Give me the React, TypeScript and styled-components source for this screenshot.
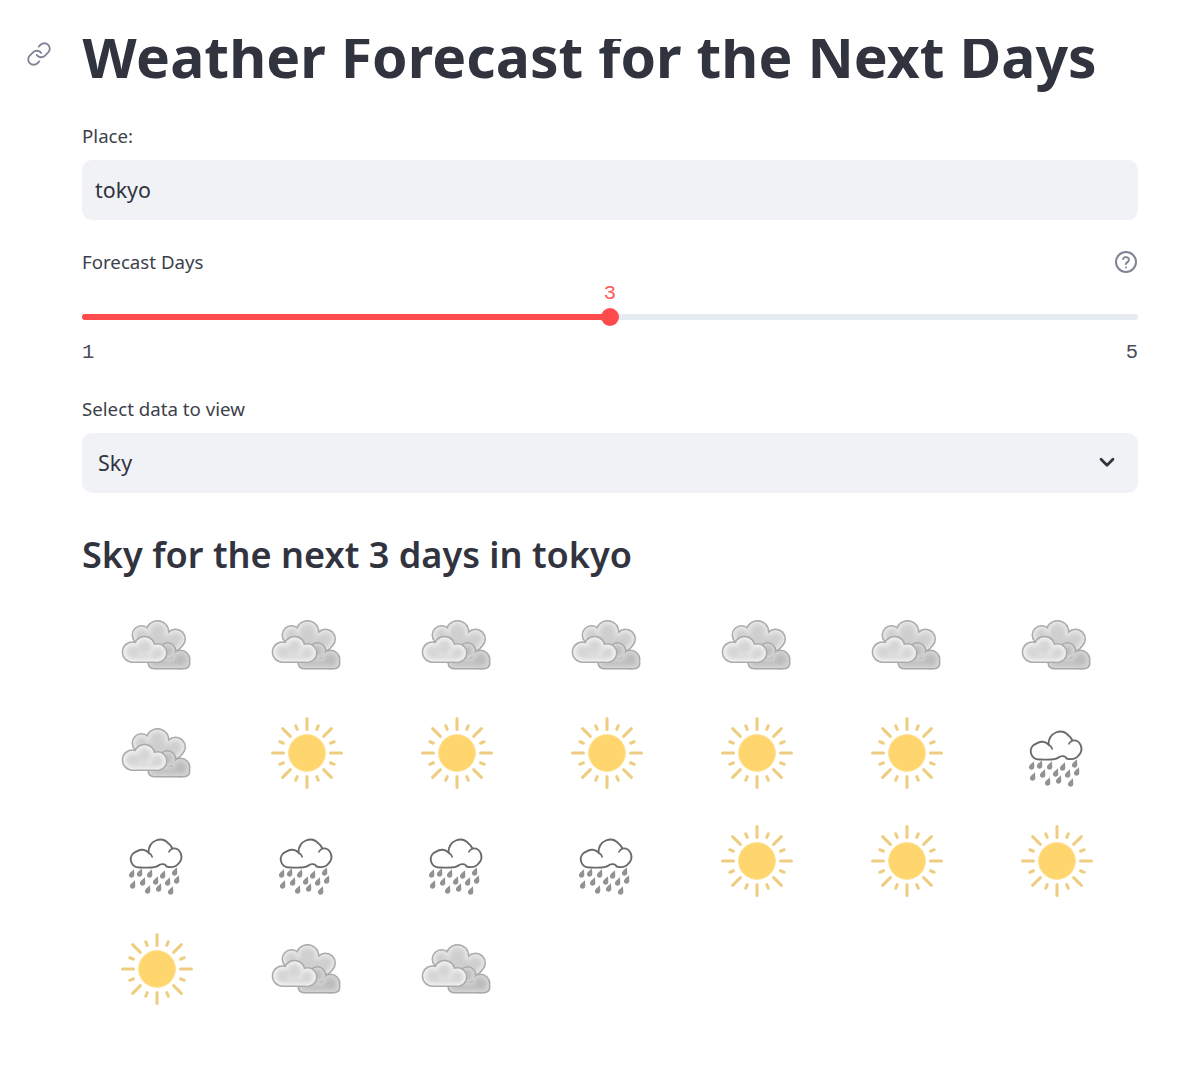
import React from "react";
import styled, { createGlobalStyle } from "styled-components";

const GlobalStyle = createGlobalStyle`
  html, body {
    margin: 0;
    padding: 0;
    background: #ffffff;
    color: #31333f;
    font-family: "Noto Sans", "Open Sans", sans-serif;
  }
`;

const Page = styled.main`
  width: 1056px;
  height: 1087px;
  padding-left: 82px;
  overflow: hidden;
`;

const TitleClip = styled.header`
  position: relative;
  height: 66px;
  margin-top: 39px;
  margin-bottom: 19px;
`;

const TitleWindow = styled.div`
  height: 66px;
  overflow: hidden;
`;

const Title = styled.h1`
  margin: 0;
  font-size: 57px;
  font-weight: 700;
  line-height: 34px;
  white-space: nowrap;
  letter-spacing: 0.06px;
  color: #31333f;
`;

const AnchorLink = styled.a`
  position: absolute;
  left: -56px;
  top: 2px;
  width: 26px;
  height: 26px;
  color: #808495;
`;

const Field = styled.section<{ $gap: number }>`
  margin-bottom: ${(p) => p.$gap}px;
`;

const LabelRow = styled.div`
  display: flex;
  justify-content: space-between;
  align-items: center;
  height: 24px;
  margin-bottom: 12px;
`;

const Label = styled.label`
  font-size: 18.7px;
  line-height: 24px;
  color: #3d3f4b;
`;

const TextInput = styled.div`
  box-sizing: border-box;
  height: 60px;
  padding: 0 0 2px 13px;
  display: flex;
  align-items: center;
  border-radius: 10px;
  background: #f0f2f6;
  font-size: 21.4px;
  color: #31333f;
`;

const SelectBox = styled(TextInput)`
  justify-content: space-between;
  padding: 0 20px 2px 16px;
`;

const HelpIcon = styled.span`
  display: flex;
  width: 24px;
  height: 24px;
  color: #808495;
`;

const SliderWrap = styled.div`
  position: relative;
  height: 66px;
  margin-top: -4px;
`;

const SliderValue = styled.span`
  position: absolute;
  top: 2px;
  transform: translateX(-50%);
  font-family: "Liberation Mono", monospace;
  font-size: 20.5px;
  line-height: 20px;
  color: #ff5a5a;
`;

const Track = styled.div`
  position: absolute;
  left: 0;
  right: 0;
  top: 32px;
  height: 6px;
  border-radius: 3px;
  background: #e6eaf1;
`;

const TrackFill = styled.div`
  height: 100%;
  border-radius: 3px;
  background: #ff4b4b;
`;

const Thumb = styled.div`
  position: absolute;
  top: 26px;
  width: 18px;
  height: 18px;
  margin-left: -9px;
  border-radius: 50%;
  background: #ff4b4b;
`;

const TickRow = styled.div`
  position: absolute;
  left: 0;
  right: 0;
  top: 61px;
  display: flex;
  justify-content: space-between;
  font-family: "Liberation Mono", monospace;
  font-size: 20.5px;
  line-height: 20px;
  color: #4a4c58;
`;

const Subtitle = styled.h2`
  margin: 0 0 29px;
  font-size: 36.1px;
  font-weight: 600;
  line-height: 52px;
  color: #31333f;
  white-space: nowrap;
`;

const IconGrid = styled.div`
  display: grid;
  grid-template-columns: repeat(7, 150px);
  grid-auto-rows: 72px;
  row-gap: 36px;
  justify-items: center;
`;

const WeatherSvg = styled.svg`
  width: 72px;
  height: 72px;
  display: block;
  overflow: visible;
  filter: blur(0.5px);
`;

type Sky = "cloud" | "sun" | "rain";

const SKIES: Sky[] = [
  "cloud", "cloud", "cloud", "cloud", "cloud", "cloud", "cloud",
  "cloud", "sun", "sun", "sun", "sun", "sun", "rain",
  "rain", "rain", "rain", "rain", "sun", "sun", "sun",
  "sun", "cloud", "cloud",
];

const Defs = () => (
  <svg width="0" height="0" style={{ position: "absolute" }} aria-hidden="true">
    <defs>
      <filter id="soft" x="-20%" y="-20%" width="140%" height="140%">
        <feGaussianBlur stdDeviation="2.2" />
      </filter>
    </defs>
  </svg>
);

// one lump of cloud: grey outline, pale rim, soft darker middle
const Puff = ({ circles, base, rim, core }: { circles: number[][]; base: number[]; rim: string; core: string }) => {
  const shapes = (grow: number, extra: object) => (
    <g {...extra}>
      {circles.map(([cx, cy, r], i) => (
        <circle key={i} cx={cx} cy={cy} r={r + grow} />
      ))}
      <rect
        x={base[0] - grow}
        y={base[1] - grow}
        width={base[2] + grow * 2}
        height={base[3] + grow * 2}
        rx={Math.max(base[3] / 2 + grow, 0)}
      />
    </g>
  );
  return (
    <g>
      {shapes(0, { fill: "#a8a8a8" })}
      {shapes(-1.5, { fill: rim })}
      {shapes(-4, { fill: core, filter: "url(#soft)" })}
    </g>
  );
};

const CloudIcon = () => (
  <g transform="translate(0.5 11)">
    <Puff rim="#e8e8e8" core="#cfcfcf" circles={[[20, 15, 10], [36, 12, 12], [54, 19, 10.5]]} base={[14, 12, 48, 20]} />
    <Puff rim="#d6d6d6" core="#bcbcbc" circles={[[46, 31, 9], [59, 39.5, 10]]} base={[26, 37, 43, 12.5]} />
    <Puff rim="#f2f2f2" core="#d6d6d6" circles={[[11, 32, 10.8], [23, 27, 11.2], [36, 33, 10]]} base={[6, 31, 36, 12]} />
  </g>
);

const SunIcon = () => {
  const rays = Array.from({ length: 16 }, (_, i) => i * 22.5);
  return (
    <g>
      {rays.map((a, i) => {
        const long = i % 2 === 0;
        return (
          <line
            key={a}
            x1="36"
            y1={long ? 1.5 : 6.5}
            x2="36"
            y2={long ? 12.5 : 10.5}
            stroke="#eecd80"
            strokeWidth="3"
            strokeLinecap="round"
            transform={`rotate(${a} 36 36)`}
          />
        );
      })}
      <circle cx="36" cy="36" r="18.5" fill="#ffd66e" stroke="#ffe4a0" strokeWidth="1" />
    </g>
  );
};

const DROPS = [
  [4, 36], [12, 35], [22, 36], [35, 37], [47, 34],
  [5, 47], [15, 44], [28, 43], [40, 44], [49, 42],
  [20, 52], [31, 50], [43, 53],
];

const RainIcon = () => (
  <g transform="translate(6.5 12.5)">
    <path
      d="M12 30 C2 30 0 17 9 14 C13 11 18 12 21 15 C21 3 34 -2 41 6 C44 8 44 10 45 11 C53 10 57 20 51 26 C48 30 43 30 39 29 C38 26 33 26 31 28 C28 31 20 30 12 30 Z"
      fill="#ffffff"
      stroke="#6a6a6a"
      strokeWidth="1.9"
    />
    <path d="M21 15 C23 16 24 17 25 20 M45 11 C43 12 42 13 41 15" fill="none" stroke="#6a6a6a" strokeWidth="1.6" />
    {DROPS.map(([x, y]) => (
      <path
        key={`${x}-${y}`}
        d={`M${x + 2.4} ${y - 4.6} C${x + 1.8} ${y - 2.8} ${x - 2.6} ${y - 1.2} ${x - 2.6} ${y + 1.8} C${x - 2.6} ${y + 5} ${x + 2.8} ${y + 5} ${x + 2.8} ${y + 1.4} C${x + 2.8} ${y} ${x + 2.6} ${y - 2.4} ${x + 2.4} ${y - 4.6} Z`}
        fill="#929292"
      />
    ))}
  </g>
);

const WeatherIcon = ({ sky }: { sky: Sky }) => (
  <WeatherSvg viewBox="0 0 72 72" role="img" aria-label={sky}>
    {sky === "cloud" && <CloudIcon />}
    {sky === "sun" && <SunIcon />}
    {sky === "rain" && <RainIcon />}
  </WeatherSvg>
);

export default function App() {
  const days = 3;
  const percent = ((days - 1) / 4) * 100;

  return (
    <>
      <GlobalStyle />
      <Defs />
      <Page>
        <TitleClip>
          <AnchorLink aria-label="link">
            <svg viewBox="0 0 24 24" width="26" height="26" fill="none" stroke="currentColor" strokeWidth="1.7" strokeLinecap="round" strokeLinejoin="round">
              <path d="M10 13a5 5 0 0 0 7.54.54l3-3a5 5 0 0 0-7.07-7.07l-1.72 1.71" />
              <path d="M14 11a5 5 0 0 0-7.54-.54l-3 3a5 5 0 0 0 7.07 7.07l1.71-1.71" />
            </svg>
          </AnchorLink>
          <TitleWindow>
            <Title>Weather Forecast for the Next Days</Title>
          </TitleWindow>
        </TitleClip>

        <Field $gap={30}>
          <LabelRow>
            <Label>Place:</Label>
          </LabelRow>
          <TextInput>tokyo</TextInput>
        </Field>

        <Field $gap={49}>
          <LabelRow>
            <Label>Forecast Days</Label>
            <HelpIcon>
              <svg viewBox="0 0 24 24" width="24" height="24" fill="none" stroke="currentColor" strokeWidth="2" strokeLinecap="round" strokeLinejoin="round">
                <circle cx="12" cy="12" r="10" />
                <path d="M9.1 9a3 3 0 0 1 5.8 1c0 2-3 2.6-3 4" />
                <path d="M12 17.4h.01" />
              </svg>
            </HelpIcon>
          </LabelRow>
          <SliderWrap>
            <SliderValue style={{ left: `${percent}%` }}>{days}</SliderValue>
            <Track>
              <TrackFill style={{ width: `${percent}%` }} />
            </Track>
            <Thumb style={{ left: `${percent}%` }} />
            <TickRow>
              <span>1</span>
              <span>5</span>
            </TickRow>
          </SliderWrap>
        </Field>

        <Field $gap={35}>
          <LabelRow>
            <Label>Select data to view</Label>
          </LabelRow>
          <SelectBox>
            <span>Sky</span>
            <svg viewBox="0 0 24 24" width="22" height="22" fill="none" stroke="#31333f" strokeWidth="3" strokeLinecap="round" strokeLinejoin="round">
              <path d="M5.5 9l6.5 6.5L18.5 9" />
            </svg>
          </SelectBox>
        </Field>

        <Subtitle>Sky for the next {days} days in tokyo</Subtitle>

        <IconGrid>
          {SKIES.map((sky, i) => (
            <WeatherIcon key={i} sky={sky} />
          ))}
        </IconGrid>
      </Page>
    </>
  );
}
